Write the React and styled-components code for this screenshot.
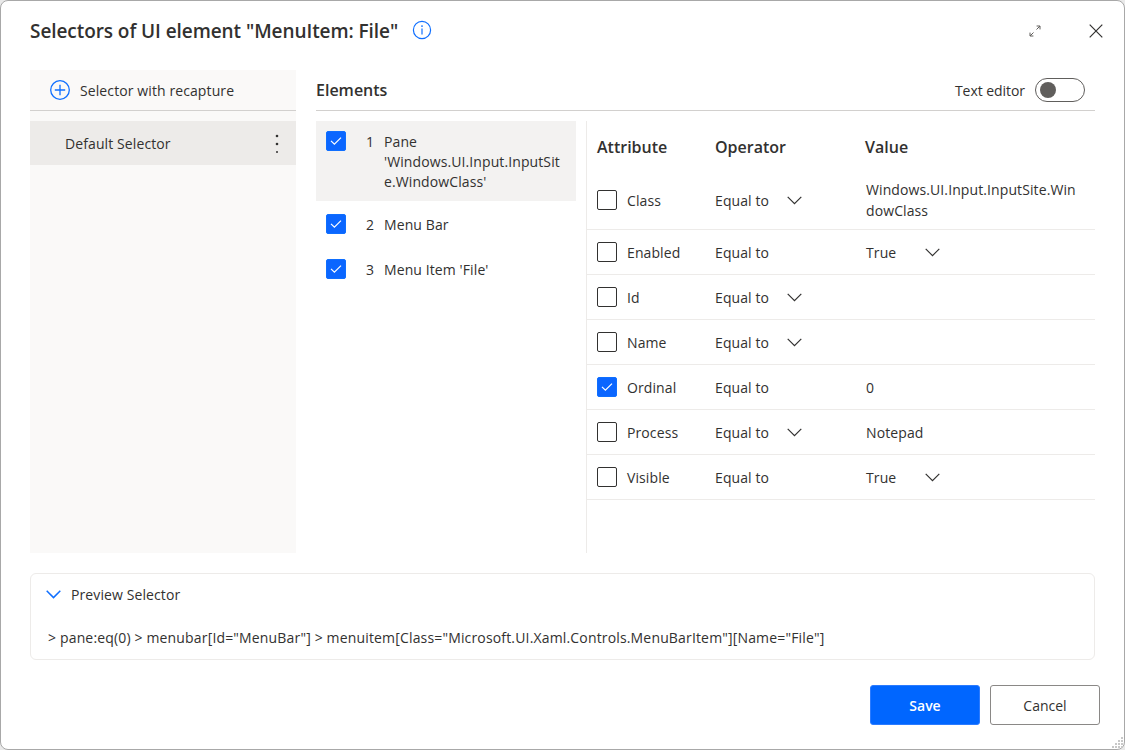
import React from "react"
import styled, { createGlobalStyle } from "styled-components"

const GlobalStyle = createGlobalStyle`
  html, body {
    margin: 0;
    padding: 0;
    background: #e9e9e9;
  }
  * {
    box-sizing: border-box;
  }
`

const Dialog = styled.div`
  position: relative;
  width: 1125px;
  height: 750px;
  display: flex;
  flex-direction: column;
  background: #fff;
  border: 1px solid #a8a8a8;
  border-radius: 8px;
  font-family: "Open Sans", "Noto Sans", sans-serif;
  font-size: 14px;
  letter-spacing: 0.1px;
  color: #323130;
`

const Header = styled.div`
  height: 69px;
  flex: none;
  display: flex;
  align-items: center;
  padding: 0 21px 10px 29px;
`

const Title = styled.h1`
  margin: 0;
  font-size: 19px;
  font-weight: 600;
  letter-spacing: -0.07px;
`

const InfoButton = styled.span`
  display: flex;
  margin-left: 14px;
  margin-top: -2px;
`

const WindowTools = styled.div`
  margin-left: auto;
  display: flex;
  align-items: center;
  gap: 47px;
`

const Body = styled.div`
  flex: none;
  height: 483px;
  margin: 0 29px;
  display: grid;
  grid-template-columns: 266px 779px;
  column-gap: 20px;
`

const LeftPanel = styled.div`
  background: #faf9f8;
`

const AddRow = styled.div`
  height: 41px;
  display: flex;
  align-items: center;
  gap: 10px;
  padding-left: 20px;
  border-bottom: 1px solid #d2d0ce;
`

const SelectorItem = styled.div`
  height: 44px;
  margin-top: 10px;
  display: flex;
  align-items: center;
  justify-content: space-between;
  padding: 0 17px 0 35px;
  background: #edebe9;
`

const RightPanel = styled.div`
  display: flex;
  flex-direction: column;
  min-width: 0;
`

const ElementsHead = styled.div`
  height: 41px;
  flex: none;
  display: flex;
  align-items: center;
  border-bottom: 1px solid #d2d0ce;
`

const SectionTitle = styled.span`
  font-size: 16px;
  font-weight: 600;
  letter-spacing: 0;
`

const EditorSwitch = styled.div`
  margin-left: auto;
  margin-right: 10px;
  display: flex;
  align-items: center;
  gap: 10px;
  letter-spacing: -0.05px;
`

const Track = styled.span`
  width: 50px;
  height: 24px;
  display: flex;
  align-items: center;
  padding-left: 4px;
  border: 1px solid #605e5c;
  border-radius: 12px;
`

const Knob = styled.span`
  width: 16px;
  height: 16px;
  border-radius: 50%;
  background: #605e5c;
`

const Columns = styled.div`
  flex: 1;
  display: flex;
  padding-top: 10px;
  min-height: 0;
`

const ElementList = styled.div`
  width: 260px;
  flex: none;
  margin-right: 10px;
`

const ElementRow = styled.div`
  display: flex;
  align-items: flex-start;
  padding: ${(p) => (p.$active ? "10px" : "13px 10px 12px")};
  background: ${(p) => (p.$active ? "#f3f2f1" : "transparent")};
  line-height: 20px;
`

const ElementIndex = styled.span`
  width: 18px;
  margin: 1px 0 -1px 20px;
  flex: none;
`

const ElementName = styled.span`
  width: 180px;
  margin: 1px 0 -1px;
  overflow-wrap: anywhere;
`

const Box = styled.span`
  width: 20px;
  height: 20px;
  flex: none;
  display: flex;
  align-items: center;
  justify-content: center;
  border-radius: 2px;
  border: 1px solid ${(p) => (p.$checked ? "#0f6fff" : "#323130")};
  background: ${(p) => (p.$checked ? "#0b66ff" : "#fff")};
`

const AttributeTable = styled.div`
  flex: 1;
  border-left: 1px solid #edebe9;
  min-width: 0;
`

const TableHead = styled.div`
  height: 53px;
  display: grid;
  grid-template-columns: 118px 150px 1fr;
  align-items: center;
  padding: 0 0 2px 10px;
  font-size: 16px;
  font-weight: 600;
  letter-spacing: 0;
`

const AttributeRow = styled.div`
  height: ${(p) => (p.$tall ? "56px" : "45px")};
  display: grid;
  grid-template-columns: 118px 151px 1fr;
  align-items: center;
  padding: ${(p) => (p.$tall ? "0 0 3px 10px" : "0 0 0 10px")};
  border-bottom: 1px solid #edebe9;
`

const AttributeName = styled.span`
  display: flex;
  align-items: center;
  gap: 10px;
`

const DropdownCell = styled.span`
  display: flex;
  align-items: center;
`

const DropdownLabel = styled.span`
  width: ${(p) => p.$width}px;
  flex: none;
`

const ValueText = styled.span`
  width: 213px;
  line-height: 21px;
  overflow-wrap: anywhere;
`

const Preview = styled.div`
  flex: none;
  height: 87px;
  margin: 20px 29px 0;
  padding: 10px 15px 0;
  border: 1px solid #edebe9;
  border-radius: 6px;
`

const PreviewHead = styled.div`
  display: flex;
  align-items: center;
  gap: 10px;
  height: 20px;
`

const PreviewCode = styled.div`
  margin-top: 24px;
  margin-left: 2px;
  line-height: 20px;
  letter-spacing: 0.16px;
  white-space: nowrap;
`

const Footer = styled.div`
  flex: none;
  display: flex;
  justify-content: flex-end;
  gap: 10px;
  margin-top: 25px;
  padding-right: 24px;
`

const Button = styled.button`
  width: 110px;
  height: 40px;
  border-radius: 3px;
  font-family: inherit;
  font-size: 14px;
  font-weight: ${(p) => (p.$primary ? 600 : 500)};
  letter-spacing: 0;
  color: ${(p) => (p.$primary ? "#fff" : "#323130")};
  background: ${(p) => (p.$primary ? "#0066ff" : "#fff")};
  border: 1px solid ${(p) => (p.$primary ? "#2b7bff" : "#8a8886")};
`

const Grip = styled.svg`
  position: absolute;
  right: 1px;
  bottom: 1px;
`

const Chevron = ({ color = "#323130", weight = 1.2 }) => (
  <svg width="15" height="9" viewBox="0 0 15 9" fill="none">
    <path d="M0.7 0.8 L7.5 7.6 L14.3 0.8" stroke={color} strokeWidth={weight} />
  </svg>
)

const Check = () => (
  <svg width="12" height="10" viewBox="0 0 12 10" fill="none">
    <path d="M1 4.8 L4.4 8.2 L11 1.6" stroke="#fff" strokeWidth="1.2" />
  </svg>
)

const CheckBox = ({ checked }) => <Box $checked={checked}>{checked && <Check />}</Box>

const InfoIcon = () => (
  <svg width="20" height="20" viewBox="0 0 20 20" fill="none">
    <circle cx="10" cy="10" r="8.6" stroke="#0f6fff" strokeWidth="1.2" />
    <path d="M10 8.6 V14.6" stroke="#0f6fff" strokeWidth="1.2" />
    <circle cx="10" cy="6.1" r="0.9" fill="#0f6fff" />
  </svg>
)

const PlusIcon = () => (
  <svg width="20" height="20" viewBox="0 0 20 20" fill="none">
    <circle cx="10" cy="10" r="9.3" stroke="#0f6fff" strokeWidth="1.3" />
    <path d="M10 4.8 V15.2 M4.8 10 H15.2" stroke="#0f6fff" strokeWidth="1.3" />
  </svg>
)

const ExpandIcon = () => (
  <svg width="14" height="14" viewBox="0 0 14 14" fill="none">
    <path d="M2 12 L5.5 8.5 M8.5 5.5 L12 2 M8.6 2 H12 V5.4 M2 8.6 V12 H5.4" stroke="#605e5c" strokeWidth="1" />
  </svg>
)

const CloseIcon = () => (
  <svg width="14" height="14" viewBox="0 0 14 14" fill="none">
    <path d="M0.7 0.7 L13.3 13.3 M13.3 0.7 L0.7 13.3" stroke="#323130" strokeWidth="1.2" />
  </svg>
)

const KebabIcon = () => (
  <svg width="4" height="20" viewBox="0 0 4 20" fill="#323130">
    <circle cx="2" cy="3" r="1.3" />
    <circle cx="2" cy="11" r="1.3" />
    <circle cx="2" cy="19" r="1" />
  </svg>
)

const elements = [
  { name: "Pane 'Windows.UI.Input.InputSite.WindowClass'", active: true },
  { name: "Menu Bar" },
  { name: "Menu Item 'File'" },
]

const attributes = [
  { name: "Class", operatorMenu: true, value: "Windows.UI.Input.InputSite.WindowClass", tall: true },
  { name: "Enabled", value: "True", valueMenu: true },
  { name: "Id", operatorMenu: true },
  { name: "Name", operatorMenu: true },
  { name: "Ordinal", checked: true, value: "0" },
  { name: "Process", operatorMenu: true, value: "Notepad" },
  { name: "Visible", value: "True", valueMenu: true },
]

const gripDots = [
  [10, 1], [7, 4], [10, 4], [4, 7], [7, 7], [10, 7], [1, 10], [4, 10], [7, 10], [10, 10],
]

export default function App() {
  return (
    <>
      <GlobalStyle />
      <Dialog>
        <Header>
          <Title>Selectors of UI element "MenuItem: File"</Title>
          <InfoButton>
            <InfoIcon />
          </InfoButton>
          <WindowTools>
            <ExpandIcon />
            <CloseIcon />
          </WindowTools>
        </Header>

        <Body>
          <LeftPanel>
            <AddRow>
              <PlusIcon />
              <span>Selector with recapture</span>
            </AddRow>
            <SelectorItem>
              <span>Default Selector</span>
              <KebabIcon />
            </SelectorItem>
          </LeftPanel>

          <RightPanel>
            <ElementsHead>
              <SectionTitle>Elements</SectionTitle>
              <EditorSwitch>
                <span>Text editor</span>
                <Track>
                  <Knob />
                </Track>
              </EditorSwitch>
            </ElementsHead>

            <Columns>
              <ElementList>
                {elements.map((el, i) => (
                  <ElementRow key={el.name} $active={el.active}>
                    <CheckBox checked />
                    <ElementIndex>{i + 1}</ElementIndex>
                    <ElementName>{el.name}</ElementName>
                  </ElementRow>
                ))}
              </ElementList>

              <AttributeTable>
                <TableHead>
                  <span>Attribute</span>
                  <span>Operator</span>
                  <span>Value</span>
                </TableHead>
                {attributes.map((attr) => (
                  <AttributeRow key={attr.name} $tall={attr.tall}>
                    <AttributeName>
                      <CheckBox checked={attr.checked} />
                      {attr.name}
                    </AttributeName>
                    <DropdownCell>
                      <DropdownLabel $width={72}>Equal to</DropdownLabel>
                      {attr.operatorMenu && <Chevron />}
                    </DropdownCell>
                    {attr.valueMenu ? (
                      <DropdownCell>
                        <DropdownLabel $width={59}>{attr.value}</DropdownLabel>
                        <Chevron />
                      </DropdownCell>
                    ) : (
                      <ValueText>{attr.value}</ValueText>
                    )}
                  </AttributeRow>
                ))}
              </AttributeTable>
            </Columns>
          </RightPanel>
        </Body>

        <Preview>
          <PreviewHead>
            <Chevron color="#0f6fff" weight={1.5} />
            <span>Preview Selector</span>
          </PreviewHead>
          <PreviewCode>
            {'> pane:eq(0) > menubar[Id="MenuBar"] > menuitem[Class="Microsoft.UI.Xaml.Controls.MenuBarItem"][Name="File"]'}
          </PreviewCode>
        </Preview>

        <Footer>
          <Button $primary>Save</Button>
          <Button>Cancel</Button>
        </Footer>

        <Grip width="12" height="12" viewBox="0 0 12 12" fill="#c8c8c8">
          {gripDots.map(([x, y]) => (
            <rect key={`${x}-${y}`} x={x} y={y} width="2" height="2" />
          ))}
        </Grip>
      </Dialog>
    </>
  )
}
